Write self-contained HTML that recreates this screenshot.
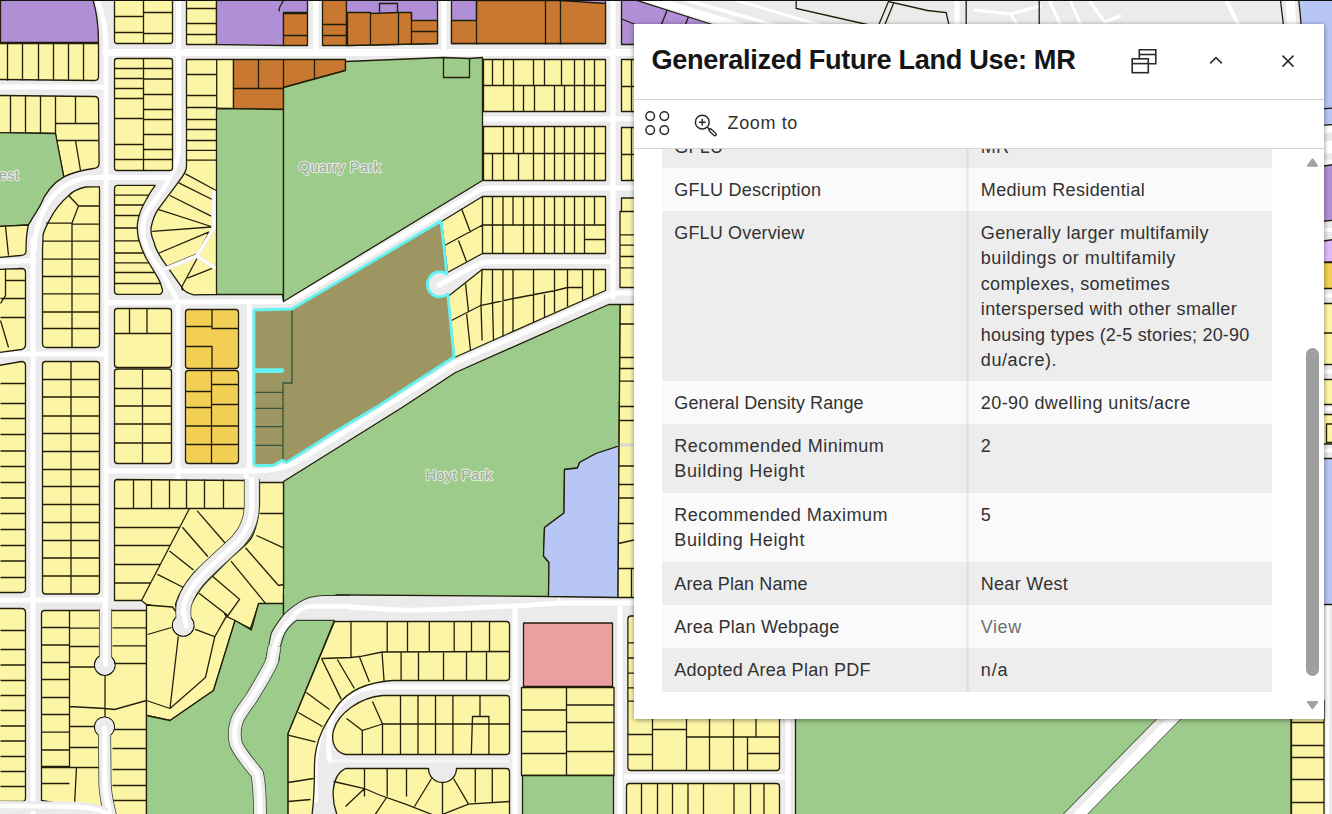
<!DOCTYPE html>
<html lang="en">
<head>
<meta charset="utf-8">
<title>Generalized Future Land Use</title>
<style>
html,body{margin:0;padding:0;}
body{width:1332px;height:814px;overflow:hidden;position:relative;background:#ebebeb;font-family:"Liberation Sans",sans-serif;}
#map{position:absolute;left:0;top:0;width:1332px;height:814px;overflow:hidden;}
#map svg{display:block;}
.popup{position:absolute;left:634px;top:24px;width:690px;height:694.8px;background:#fff;box-shadow:0 1px 5px rgba(0,0,0,.45);color:#323232;}
.hdr{position:absolute;left:0;top:0;width:690px;height:75px;border-bottom:1px solid #d4d4d4;}
.hdr h2{position:absolute;left:17.5px;top:16.6px;margin:0;font-size:27.2px;line-height:38px;font-weight:bold;color:#151515;white-space:nowrap;letter-spacing:-0.36px;}
.hbtn{position:absolute;top:0;width:40px;height:75px;}
.hbtn svg{position:absolute;left:50%;top:50%;}
.act{position:absolute;left:0;top:76px;width:690px;height:48px;border-bottom:1px solid #d4d4d4;}
.act .zt{position:absolute;left:93.6px;top:11.2px;font-size:18px;line-height:24px;color:#323232;letter-spacing:.62px;}
.body{position:absolute;left:0;top:125px;width:690px;height:569px;overflow:hidden;}
table.ft{position:absolute;left:28px;top:-24.2px;width:610px;border-collapse:separate;border-spacing:0;table-layout:fixed;font-size:18px;line-height:25.4px;color:#323232;letter-spacing:0;white-space:nowrap;}
table.ft th,table.ft td{padding:10px 0 0 12.3px;text-align:left;vertical-align:top;font-weight:normal;word-break:break-word;}
table.ft th{width:307px;box-sizing:border-box;border-right:3.5px solid rgba(0,0,0,.055);}
table.ft td{width:303px;box-sizing:border-box;padding-left:11.8px;}
table.ft tr:nth-child(odd){background:#ededed;}
table.ft tr:nth-child(even){background:#fafafa;}
table.ft a{color:#6e6e6e;text-decoration:none;}
.sb{position:absolute;right:0;top:0;width:20px;height:569px;background:#fff;}
.sb .thumb{position:absolute;left:2px;top:199px;width:13px;height:328px;border-radius:7px;background:#9f9f9f;}
.sb .up{position:absolute;left:2px;top:10px;width:0;height:0;border-left:6.5px solid transparent;border-right:6.5px solid transparent;border-bottom:8px solid #a3a3a3;}
.sb .dn{position:absolute;left:2px;top:552px;width:0;height:0;border-left:6.5px solid transparent;border-right:6.5px solid transparent;border-top:8px solid #a3a3a3;}

</style>
</head>
<body>
<div id="map">
<svg width="1332" height="814" viewBox="0 0 1332 814">
<rect width="1332" height="814" fill="#ebebeb"/>
<g fill="none" stroke="#ffffff" stroke-linecap="round" stroke-linejoin="round">
<path d="M33 240 L33 814" stroke-width="5"/>
<path d="M106 814" stroke-width="5"/>
<path d="M95 -5 C104 15 106 30 106 52 L106 600" stroke-width="5"/>
<path d="M178.5 -5 L178.5 150 C178 165 170 180 157.6 197 C150 207 145 213 143.5 222 C142 232 144 244 149.8 254 C153 260 157 266 161.6 271.7 L176 298 L178 302 L178 478" stroke-width="5"/>
<path d="M249.3 302 L249.3 470" stroke-width="5"/>
<path d="M246 470 C250 520 240 530 215 552 C190 575 182 600 183 622" stroke-width="5"/>
<path d="M315.6 -5 L315.6 52" stroke-width="5.5"/>
<path d="M444 -5 L444 52" stroke-width="5"/>
<path d="M613 -5 L613 297" stroke-width="5"/>
<path d="M515 608 L515 814" stroke-width="5"/>
<path d="M620 608 L620 814" stroke-width="5"/>
<path d="M788 700 L788 814" stroke-width="5"/>
<path d="M1327.5 600 L1327.5 814" stroke-width="3.5"/>
<path d="M106 52.6 L700 52.6" stroke-width="7"/>
<path d="M0 87 L106 87" stroke-width="5"/>
<path d="M482 119 L700 119" stroke-width="5"/>
<path d="M700 188 L490 188 C480 188 476 192 470 196 L290 301.5 L106 302.5" stroke-width="5"/>
<path d="M34 250 C35 225 45 200 62 188 C72 181 80 178 90 177.5 L166 177.5" stroke-width="5"/>
<path d="M-2 262 L34 260.5" stroke-width="5"/>
<path d="M0 354 L106 354" stroke-width="5"/>
<path d="M0 600 L106 600" stroke-width="5"/>
<path d="M106 471 L255 471" stroke-width="5"/>
<path d="M246 471 C270 472 285 468 300 460 L455 363 L613 293 L700 293" stroke-width="5"/>
<path d="M439 285 L478 264 C485 261.5 490 261.5 500 261.5 L613 261.5" stroke-width="5"/>
<path d="M320 606.5 C350 606.5 380 609 403 610 C440 610.5 480 607 514 606 C540 605 550 603 565 603 L700 603" stroke-width="4.8"/>
<path d="M559 603 L559 597" stroke-width="2"/>
<path d="M508 687 L380 687 C350 687 335 705 330 725 C328 745 328 755 330 761" stroke-width="5"/>
<path d="M330 761 L508 761" stroke-width="3" stroke="#f7f7f7"/>
<path d="M332 710 C318 730 312 760 316 800" stroke-width="5"/>
<path d="M626 777 L788 777" stroke-width="5"/>
<path d="M105 600 L105 664" stroke-width="5"/>
<path d="M105 727 L105 790 C106 800 108 806 110 814" stroke-width="5"/>
<path d="M0 806 C60 806 90 806 110 812" stroke-width="5"/>
<path d="M646 -2 L745 28" stroke-width="8"/>
<path d="M686 0 L785 28" stroke-width="3.5"/>
<path d="M735 0 L830 28" stroke-width="3"/>
<path d="M957 -2 L957 28" stroke-width="5"/>
<path d="M975 10 L1010 14 L1020 28 M1010 14 L1040 6" stroke-width="3"/>
<path d="M1050 2 L1062 28 M1070 0 L1082 28 M1090 2 L1105 22 L1120 16" stroke-width="3"/>
<path d="M1225 -2 L1240 28" stroke-width="4"/>
<path d="M1290 -2 L1292 28" stroke-width="9"/>
<path d="M1315 130 L1340 128.5" stroke-width="7"/>
<path d="M1315 148 L1340 146.5" stroke-width="13"/>
<path d="M1315 163.5 L1340 161.5" stroke-width="5"/>
<path d="M1318 230 L1340 230" stroke-width="4"/>
<path d="M1318 295.5 L1340 295.5" stroke-width="4"/>
<path d="M1318 371.5 L1340 371.5" stroke-width="4"/>
<path d="M1318 409 L1340 409" stroke-width="4"/>
<path d="M1318 450.5 L1340 450.5" stroke-width="4"/>
</g>
<g stroke="#211e0a" stroke-width="1.3" stroke-linejoin="round" transform="translate(0.5 0.5)">
<path d="M0 -2 L92 -2 C96 10 98 25 98 42 L0 42 Z" fill="#b08fd6"/>
<rect x="114" y="-3" width="58" height="46" fill="#fdf5a6" rx="2.5"/>
<rect x="186" y="-3" width="30" height="47" fill="#fdf5a6"/>
<polygon points="216,-2 307,-2 307,12 283,12 283,45 216,44" fill="#b08fd6"/>
<path d="M279 11 C277 8 281 4 283 0" fill="none"/>
<rect x="283" y="13" width="24" height="32" fill="#c87830"/>
<rect x="322" y="-2" width="24" height="47" fill="#c87830"/>
<path d="M-2 43 L98 43 L98 76 Q98 80 94 80 L-2 79 Z" fill="#fdf5a6"/>
<path d="M-2 95 L94 96 Q98 96 98 100 L98.6 163 Q98.6 167.5 93 168 C80 170 70 173 63.3 176.4 L56 140 L55 133 L-2 132 Z" fill="#fdf5a6"/>
<path d="M-2 132 L55 133 L63.3 176.4 C52 183 44 194 39.7 204.9 C35 213 31 219 27.9 224.5 L-2 226 Z" fill="#9dcb8b"/>
<rect x="114" y="58" width="58" height="112" fill="#fdf5a6" rx="2.5"/>
<path d="M186 59 L233 59 L233 108 L216.2 108 L216.2 294 L193 294.3 C189 293 186 292 183.2 289.4 L166.5 265.8 C160 257 155 250 153.7 242.2 C151 236 150 231 150.7 226.5 C152 220 154 214 157.6 208.8 L177.3 182.3 C182 176 186 172 186 165.6 Z" fill="#fdf5a6"/>
<polygon points="233,59 345,59 345,70 283,87 283,109 233,108" fill="#c87830"/>
<polygon points="216,108 283,109 283,301 282,294 216,294" fill="#9dcb8b"/>
<polygon points="346,-2 437,-2 437,43 346,45" fill="#b08fd6"/>
<polygon points="347,12 370,12 370,13 398,12 411,12 411,20 437,20 437,43 347,45" fill="#c87830"/>
<polygon points="451,-2 605,-2 605,43 451,43" fill="#b08fd6"/>
<polygon points="451,20 476,20 476,0 560,0 605,3 605,43 451,43" fill="#c87830"/>
<polygon points="621,-2 630.5,-2 711.6,24 711.6,44 621,44" fill="#b08fd6"/>
<polygon points="283,87 345,70 345,61 443,57 469,58 482,57 482,180 283,301" fill="#9dcb8b"/>
<rect x="483" y="59" width="122" height="52" fill="#fdf5a6"/>
<rect x="483" y="126" width="122" height="54" fill="#fdf5a6"/>
<rect x="621" y="59" width="79" height="52" fill="#fdf5a6"/>
<rect x="621" y="127" width="79" height="53" fill="#fdf5a6"/>
<path d="M-2 226 L27.9 224.5 C26 232 25.5 240 25.5 251 Q25 255 20 255 L-2 257 Z" fill="#fdf5a6"/>
<path d="M-2 269 L21 268 Q25 268 25 272 L25 344 Q25 348 21 349 L-2 352 Z" fill="#fdf5a6"/>
<path d="M98.6 186.2 L84.9 186.5 C78 188 72 191 68.2 195 C60 202 54 210 49.5 218.6 C46 225 43.5 230 42.6 234.4 L42 250 L42 343 Q42 347 46 347 L95 347 Q99 347 99 343 L99 189 Q99 186 98.6 186.2 Z" fill="#fdf5a6"/>
<path d="M117 184.8 L154.7 184.8 C150 191 148 195 145.8 199 C141 207 138 215 137 222.6 C136.5 228 137 233 138 238.3 C140 245 142 251 145.8 258 L157.6 277.6 C160 282 161 285 162 289.4 Q162 293.8 158 293.8 L117 293.8 Q114 293.8 114 290.8 L114 187.8 Q114 184.8 117 184.8 Z" fill="#fdf5a6"/>
<rect x="114" y="308" width="57" height="59" fill="#fdf5a6" rx="3"/>
<rect x="185" y="309" width="53" height="59" fill="#f3d055" rx="3"/>
<polygon points="441,221 482,196 605,196 605,253 482,253 447,272" fill="#fdf5a6"/>
<polygon points="447.5,296 481.6,269 605,269 605,290 454,357" fill="#fdf5a6"/>
<polygon points="621,197.5 700,197.5 700,287 619.5,287 619.5,211 621,211" fill="#fdf5a6"/>
<polygon points="619.5,304 700,304 700,412 618.8,412" fill="#fdf5a6"/>
<polygon points="283,481 400,408 455,372 608,304 619.5,304 618.5,445.5 595.5,453 579,462 577,467.5 564,469 563.5,512.5 544,527 543,555.5 548.5,562 548,596 283,594" fill="#9dcb8b"/>
<path d="M-2 365 L21 361 Q25 361 25 365 L25 588 Q25 592 21 592 L-2 592 Z" fill="#fdf5a6"/>
<rect x="42" y="361" width="57" height="232.5" fill="#fdf5a6" rx="3"/>
<rect x="114" y="368.5" width="57" height="94.5" fill="#fdf5a6" rx="3"/>
<rect x="185" y="370" width="53" height="93" fill="#f3d055" rx="3"/>
<path d="M117 479 L245 480 L245 513 C244 528 235 537 224 544 C212 555 200 566 193 572.7 C185 582 178 594 175 603.7 L176 610 L146 604 L141 600 L114 600 L114 482 Q114 479 117 479 Z" fill="#fdf5a6"/>
<path d="M259 482 L283 482 L283 604 L258 604 L250 628 L228 617 L220 612 L188 612 C189 606 190 604 190.7 603.7 C196 594 200 588 206 581.6 L230.7 557 C243 546 251 540 253 533 C256 525 257.5 520 258 513 L259 505 Z" fill="#fdf5a6"/>
<polygon points="618.5,445.5 595.5,453 579,462 577,467.5 564,469 563.5,512.5 544,527 543,555.5 548.5,562 548,596 617.5,597" fill="#b8c6f5"/>
<polygon points="618.9,400 700,400 700,597 617.5,597" fill="#fdf5a6" stroke="none"/>
<rect x="618" y="443" width="22" height="3" fill="#d8d8d8" stroke="none"/>
<path d="M-2 608 L21 608 Q25 608 25 612 L25 798 Q25 801 21 801 L-2 801 Z" fill="#fdf5a6"/>
<path d="M44 610 L146 610 L146 818 L112 818 C108 808 95 806 80 806 C65 806 55 802 41 800 L41 613 Q41 610 44 610 Z" fill="#fdf5a6"/>
<path d="M146 604.5 L172 606.5 L176 612 L222 612 L228 617 L234.6 620 L213 690 L169.5 720 L146 715 Z" fill="#fdf5a6"/>
<rect x="187.5" y="609.5" width="36" height="6" fill="#fdf5a6" stroke="none"/>
<polygon points="146,715 169.5,720 213,690 234.6,620 250.8,629.5 258,603 283,603 283,616 300,619.8 334,619.8 287.6,733 287.6,818 146,818" fill="#9dcb8b"/>
<polygon points="283.5,588 335,588 335,596 300,604 283.5,617" fill="#9dcb8b" stroke="none"/>
<rect x="288" y="757.5" width="25" height="2.5" fill="#c9c9c9" stroke="none"/>
<path d="M334 621 L506 621 Q509 621 509 624 L509 677 Q509 680 506 680 L392 680 C365 682 348 690 337 705 C325 722 314 740 314 765 C314 790 313 805 311 818 L287.6 818 L287.6 733 Z" fill="#fdf5a6"/>
<path d="M382 695 L506 695 Q509 695 509 698 L509 751 Q509 754 506 754 L345 754 C335 752 330 742 333 730 C338 712 360 697 382 695 Z" fill="#fdf5a6"/>
<path d="M345 768 L428 768 A14 14 0 0 0 456 768 L506 768 Q509 768 509 771 L509 818 L338 818 C330 800 330 775 345 768 Z" fill="#fdf5a6"/>
<rect x="523" y="622.5" width="89" height="63.5" fill="#eb9fa0"/>
<rect x="521" y="687" width="92.5" height="88" fill="#fdf5a6"/>
<rect x="522" y="775" width="91" height="43" fill="#9dcb8b"/>
<rect x="627.4" y="615.5" width="151.6" height="154.5" fill="#fdf5a6" rx="3"/>
<rect x="626" y="783" width="153" height="35" fill="#fdf5a6" rx="3"/>
<rect x="795" y="700" width="495.5" height="118" fill="#9dcb8b"/>
<rect x="1291" y="700" width="32.5" height="118" fill="#fdf5a6"/>
<path d="M1298 -2 L1340 -2 L1340 123.5 L1305 126 C1304 80 1302 30 1298 -2 Z" fill="#b8c6f5"/>
<polygon points="1320,166 1340,163 1340,219 1320,221" fill="#b08fd6"/>
<polygon points="1320,241 1340,238 1340,261 1320,262" fill="#e0b9fa"/>
<rect x="1320" y="262" width="20" height="26" fill="#f3d055"/>
<rect x="1320" y="303" width="20" height="61" fill="#fdf5a6"/>
<rect x="1320" y="379" width="20" height="25" fill="#fdf5a6"/>
<rect x="1320" y="414" width="20" height="29.5" fill="#fdf5a6"/>
<rect x="1326" y="423.5" width="14" height="18.5" fill="#fdf5a6"/>
<rect x="1320" y="458" width="20" height="146" fill="#b8c6f5"/>
</g>
<path transform="translate(0.5 0.5)" fill="none" stroke="#211e0a" stroke-width="1.3" d="M143 -3L143 43M114 16L143 16M114 32L143 32M143 12L172 12M143 33L172 33M186 8L216 8M186 23L216 23M186 34L216 34M283 35L307 35M322 24L346 24M322 35L346 35M7 43L7 80M22 43L22 80M38 43L38 80M53 43L53 80M68 43L68 80M83 43L83 80M10 95L10 132M25 95L25 132M40 95L40 132M55 96L55 133M75 96L75 123M55 123L98 123M56 140L98 140M75 140L80 170M143 58L143 170M114 68L143 68M114 78L143 78M114 88L143 88M114 98L143 98M114 118L143 118M114 144L143 144M114 159L143 159M143 68L172 68M143 78.5L172 78.5M143 94L172 94M143 109L172 109M143 119L172 119M143 134L172 134M143 149L172 149M143 159L172 159M216.2 59L216.2 108M186 74L216.2 74M186 95L216.2 95M186 107L216.2 107M186 119L216.2 119M186 129L216.2 129M186 140L216.2 140M186 149.8L216.2 149.8M186 159.7L216.2 159.7M185 173.4L215.6 190M178.3 182.3L211.7 199M169.4 195L210.7 215.7M157.6 208.8L210.7 226M151.7 230.8L210.7 226.5M158.6 252.5L208.7 231.4M166.5 265.8L196 253.6M208.7 231.4L197 254M197 257L181.2 286.5L182 290M211.7 267.8L187 277.6M258 59L258 88M233 88L283 88M283 59L283 87M314 59L314 78M370 12L370 44M398 12L398 44M411 12L411 44M411 31L437 31M379 12L379 3L397 3L397 12M476 0L476 44M545 0L545 44M560 0L560 44M621 18.5L640 26M443 57L443 77L469 77L469 58M483 85L605 85M492 59L492 85M503 59L503 85M513 59L513 85M533 59L533 85M544 59L544 85M561 59L561 85M574 59L574 85M584 59L584 85M594 59L594 85M513 85L513 111M523 85L523 111M534 85L534 111M554 85L554 111M564 85L564 111M574 85L574 111M584 85L584 111M594 85L594 111M483 153L605 153M503 126L503 153M513 126L513 153M523 126L523 153M533 126L533 153M544 126L544 153M554 126L554 153M564 126L564 153M574 126L574 153M584 126L584 153M594 126L594 153M492 153L492 180M503 153L503 180M518 153L518 180M533 153L533 180M544 153L544 180M554 153L554 180M564 153L564 180M574 153L574 180M584 153L584 180M594 153L594 180M631 59L631 111M621 86L700 86M631 127L631 180M621 154L700 154M5 226L8 255M5 268L5 295L0 303M5 280L25 280M0 298L25 298M0 317L25 317M0 320L8 347M68.2 195L78 205.5L71.5 222.6L71.5 347M78 205.5L99 205.5M45.6 222.6L71.5 222.6M71.5 223.6L99 223.6M42 240.7L99 240.7M42 258.6L99 258.6M42 276L99 276M42 293.4L99 293.4M42 311.5L99 311.5M42 328L99 328M114 194.7L148 194.7M114 204.5L143 204.5M114 215L139 215M114 227.5L137 227.5M114 240.3L139 240.3M114 252.5L143 252.5M114 262.3L148.5 262.3M114 272L154 272M114 283L160 283M129 308L129 333M146.5 308L146.5 333M114 333L171 333M211.5 309L211.5 328L238 328M185 326L211.5 326M185 346L211.5 346L211.5 368M482 196L482 253M482 224.5L605 224.5M492 196L492 224.5M502.5 196L502.5 224.5M512.5 196L512.5 224.5M523 196L523 224.5M533 196L533 224.5M544 196L544 224.5M554 196L554 224.5M564 196L564 224.5M574 196L574 224.5M584 196L584 224.5M594 196L594 224.5M492 224.5L492 253M502.5 224.5L502.5 253M523 224.5L523 253M533 224.5L533 253M544 224.5L544 253M554 224.5L554 253M564 224.5L564 253M574 224.5L574 253M584 224.5L584 253M584 239L605 239M461 208L470 232M444 245L482 224.5M458 240L466 261M451 320L480 305L513 298L555 290L567 287L582 287M465 283L468 311M466 312L470 350M481.6 269L480.5 304.4L481.6 340M492 269L492 303M492 303L493 340M502.5 269L502.5 336M512.5 269L512.5 331M533 269L533 322M544 294L544 317M554 269L554 312M567 269L567 306M582 269L582 300M593 269L593 295M620 211L700 211M620 234.4L700 234.4M620 244.7L700 244.7M620 256L700 256M620 267.4L700 267.4M619 323.5L700 323.5M619 357L700 357M619 368L700 368M619 380.6L700 380.6M619 406L700 406M0 383L25 383M0 403L25 403M0 418L25 418M0 434L25 434M0 450.5L25 450.5M0 466L25 466M0 482L25 482M0 497.5L25 497.5M0 513L25 513M0 529L25 529M0 545L25 545M0 560.5L25 560.5M0 577L25 577M70.5 361L70.5 593.5M42 379L99 379M42 396.5L99 396.5M42 415.5L99 415.5M42 433L99 433M42 451L99 451M42 469L99 469M42 486L99 486M42 504L99 504M42 522L99 522M42 540L99 540M42 557.5L99 557.5M42 575.5L99 575.5M142 368.5L142 463M114 388L171 388M114 405.5L171 405.5M114 423.5L171 423.5M114 442.5L171 442.5M211 370L211 463M185 391L211 391M211 384L238 384M185 407L211 407M211 404L238 404M185 425.5L238 425.5M185 444L238 444M114 508L244 508M133 479L133 508M151 479L151 508M169 479L169 508M186 479L186 508M204 479L204 508M223 479L223 508M189 508L141 600M114 527L179.087 527M114 545L169.696 545M114 564L159.783 564M114 582.5L150.13 582.5M196.7 510.4L225 543M181.9 526.7L207.3 556M169 550.6L193 569.4M157 573.8L183 587M259 513L283 513M256 535L283 547.3M245 547.3L278 585L283 584M230.5 560.6L264.8 602.6M211.7 575.4L239 598.8L226 617M198.5 592.7L227 614.8M618.9 400L617.5 597M617.5 597L700 597M618 420L640 420M618 465.5L640 465.5M618 484L640 484M618 497.5L640 497.5M618 523L640 523M618 568L640 568M618 543L640 538M631 568L631 597M0 630L25 630M0 649L25 649M0 664.5L25 664.5M0 680L25 680M0 695L25 695M0 710L25 710M0 725.5L25 725.5M0 740.5L25 740.5M0 756L25 756M0 771L25 771M0 786L25 786M69 610L69 767M41 627L69 627M41 644.5L69 644.5M41 662L69 662M41 679L69 679M41 697L69 697M41 714L69 714M41 731.7L69 731.7M41 749.5L69 749.5M41 766L69 766M41 783L69 783M69 627.7L99 627.7M69 646L99 646M69 666.5L99 666.5M69 726L99 726M69 747L99 747M69 767L99 767M69 706L104.5 708L114 709L146 700M41 767L76 767M76 767L74 805M112 627.4L146 627.4M112 645.4L146 645.4M112 663L146 663M112 729L146 729M112 748L146 748M112 769L146 769M112 785L146 785M112 800L146 800M104.5 675L104.5 717M147 634L171 627M177.8 636L169.5 708M146 700L169.5 708M194.7 628.8L214.3 636.2L205 677L169.5 708M214.3 636.2L226.5 614.6M283 594L283 616M287.6 734.7L315 741.4M287.6 782L313 778M287.6 801L310 799M321 658L350.5 657L361.8 655.7L381.5 651.5L509 651M350.5 621L350.5 651M386.7 621L386.7 651M407 621L407 651M428.8 621L428.8 651M453.7 621L453.7 651M471 621L471 651M489 621L489 651M350.5 651L350.5 657M381.5 651.5L383.6 681M400.6 651L400.6 680M418 651L418 680M443 651L443 680M466 651L466 680M486 651L486 680M336.8 659L353.9 688M359 656.5L368.9 681.5M321 658L340.7 698.6M305.8 692L329 709M297.8 712L322 726M382 723.5L509 723.5M382 723.5L361.8 730L361.8 754M361.8 730L346 718M372 701L382 723.5M400 695L400 754M417.5 695L417.5 754M435 695L435 754M452.4 695L452.4 754M382 723.5L382 754M479.5 695L479.5 716M470.8 754L472 716L488.4 716L488.4 754M364 768L364 796M386.7 768L386.7 796M406 768L406 796M474.8 768L474.8 802M491.8 768L491.8 802M333 781L364 788L379 794.5L405 803.7L436.7 816M509 801L468 803.7L436.7 816M442 782L442 814M431 778L414 806M453 778L468 803.7M364 788L345 806M386 797L372 818M566 687L566 775M521 709.5L566 709.5M521 731L566 731M521 753L566 753M566 704.5L613.5 704.5M566 722L613.5 722M566 751L613.5 751M627.4 642.3L652 642.3M627.4 657.5L652 657.5M627.4 672.7L652 672.7M627.4 687.3L652 687.3M627.4 700.6L652 700.6M652 700L652 770M686 700L686 770M709 700L709 770M733 700L733 770M755.5 700L755.5 736.5M747 736.5L747 770M627 734L652 734M627 754L652 754M652 729L686 729M686 736.5L779 736.5M747 753L779 753M641 783L641 818M657 783L657 818M672 783L672 818M687.5 783L687.5 818M703 783L703 818M733.5 783L733.5 818M750 783L750 818M763.5 783L763.5 818M1291 722L1323.5 722M1291 745L1323.5 745M1291 757L1323.5 757M1291 779L1323.5 779M1291 802L1323.5 802M666.7 9.6L660.5 25M688 16.2L684.6 25M795.7 0L795.7 8L871 25M878 25L888 1L927 10L945.7 12L948.6 25M884 25L893 3M965.7 0L965.7 25M1038.7 0L1038.7 25M1280 0L1283 25M1305 109.5L1340 107M1320 332.5L1340 332.5"/>
<circle cx="183.2" cy="625.4" r="10.8" fill="#ebebeb" stroke="#14140c" stroke-width="1.2"/>
<path d="M251.8 479 L251.8 506 C251.5 522 246 532 238 541 C230 549 215 562 204 573 C195 582 187 594 184 604 C183 610 183 615 184 620" fill="none" stroke="#3a4a30" stroke-width="15.8" stroke-linecap="butt" stroke-linejoin="round"/>
<path d="M251.8 479 L251.8 506 C251.5 522 246 532 238 541 C230 549 215 562 204 573 C195 582 187 594 184 604 C183 610 183 615 184 620" fill="none" stroke="#ebebeb" stroke-width="14.2" stroke-linecap="butt" stroke-linejoin="round"/>
<path d="M251.8 479 L251.8 506 C251.5 522 246 532 238 541 C230 549 215 562 204 573 C195 582 187 594 184 604 C183 610 183 615 184 620" fill="none" stroke="#ffffff" stroke-width="5" stroke-linecap="round" stroke-linejoin="round"/>
<circle cx="183.2" cy="625.4" r="10.2" fill="#ebebeb"/>
<path d="M184 612 L186 626" stroke="#fff" stroke-width="5" stroke-linecap="round"/>
<circle cx="104.8" cy="665" r="10.3" fill="#ebebeb" stroke="#14140c" stroke-width="1.2"/>
<path d="M105.5 609 L105.5 660" fill="none" stroke="#3a4a30" stroke-width="13.1" stroke-linecap="butt" stroke-linejoin="round"/>
<path d="M105.5 609 L105.5 660" fill="none" stroke="#ebebeb" stroke-width="11.5" stroke-linecap="butt" stroke-linejoin="round"/>
<path d="M105.5 609 L105.5 660" fill="none" stroke="#ffffff" stroke-width="5" stroke-linecap="round" stroke-linejoin="round"/>
<circle cx="104.8" cy="665" r="9.7" fill="#ebebeb"/>
<path d="M105.5 640 L105.5 664" stroke="#fff" stroke-width="5" stroke-linecap="round"/>
<circle cx="104.5" cy="727" r="10" fill="#ebebeb" stroke="#14140c" stroke-width="1.2"/>
<path d="M104.5 732 L105 785 C106 800 108 806 111 818" fill="none" stroke="#3a4a30" stroke-width="13.1" stroke-linecap="butt" stroke-linejoin="round"/>
<path d="M104.5 732 L105 785 C106 800 108 806 111 818" fill="none" stroke="#ebebeb" stroke-width="11.5" stroke-linecap="butt" stroke-linejoin="round"/>
<path d="M104.5 732 L105 785 C106 800 108 806 111 818" fill="none" stroke="#ffffff" stroke-width="5" stroke-linecap="round" stroke-linejoin="round"/>
<circle cx="104.5" cy="727" r="9.4" fill="#ebebeb"/>
<path d="M104.5 728 L105 750" stroke="#fff" stroke-width="5" stroke-linecap="round"/>
<path d="M-5 806 C40 806 60 806 80 807 C90 808 100 810 106 813" fill="none" stroke="#ebebeb" stroke-width="10" stroke-linecap="butt" stroke-linejoin="round"/>
<path d="M-5 806 C40 806 60 806 80 807 C90 808 100 810 106 813" fill="none" stroke="#ffffff" stroke-width="4.5" stroke-linecap="round" stroke-linejoin="round"/>
<path d="M350 595.5 L323 595.5 C310 596 304 599 298.8 602.6 C292 607 287 611 283 615.4 C278 622 274 628 271.3 633 L265.6 661 L278.9 661 L280 648.8 C281 644 282 639 285 633 C288 628 291 624 296.8 620.3 L350 620.3 Z" fill="#ebebeb"/>
<path d="M350 595.5 L323 595.5 C310 596 304 599 298.8 602.6 C292 607 287 611 283 615.4 C278 622 274 628 271.3 633 L265.6 661" fill="none" stroke="#2c3a25" stroke-width="1.1"/>
<path d="M334.2 620.3 L296.8 620.3 C291 624 288 628 285 633 C282 639 281 644 280 648.8 L278.9 661" fill="none" stroke="#2c3a25" stroke-width="1.1"/>
<path d="M274.6 646 L272.3 660 C270 668 262 680 251.6 697.8 C243 710 238 716 236.5 722 C234 730 234 736 236 744 C239 752 250 765 257 773.5 C260 785 260 800 260 818" fill="none" stroke="#3a4a30" stroke-width="13.6" stroke-linecap="butt" stroke-linejoin="round"/>
<path d="M274.6 646 L272.3 660 C270 668 262 680 251.6 697.8 C243 710 238 716 236.5 722 C234 730 234 736 236 744 C239 752 250 765 257 773.5 C260 785 260 800 260 818" fill="none" stroke="#ebebeb" stroke-width="12" stroke-linecap="butt" stroke-linejoin="round"/>
<path d="M274.6 646 L272.3 660 C270 668 262 680 251.6 697.8 C243 710 238 716 236.5 722 C234 730 234 736 236 744 C239 752 250 765 257 773.5 C260 785 260 800 260 818" fill="none" stroke="#ffffff" stroke-width="4.8" stroke-linecap="round" stroke-linejoin="round"/>
<path d="M352 606.5 L308.6 606.5 C300 608 295 613 291 619.3 C285 626 280 633 277.2 639 C275 646 273 654 272.3 661" fill="none" stroke="#fff" stroke-width="4.7" stroke-linecap="round"/>
<path d="M213.7 191 L213.7 228.5 L197 256 L163.5 269.8 M197 256 L214.6 267.8" fill="none" stroke="#ebebeb" stroke-width="4.2" stroke-linecap="butt" stroke-linejoin="round"/>
<path d="M213.7 191 L213.7 228.5 L197 256 L163.5 269.8 M197 256 L214.6 267.8" fill="none" stroke="#ffffff" stroke-width="2.4" stroke-linecap="round" stroke-linejoin="round"/>
<path d="M1180.7 706.7 L1063.6 826.1" fill="none" stroke="#3a4a30" stroke-width="18" stroke-linecap="butt" stroke-linejoin="round"/>
<path d="M1180.7 706.7 L1063.6 826.1" fill="none" stroke="#ebebeb" stroke-width="16.4" stroke-linecap="butt" stroke-linejoin="round"/>
<path d="M1180.7 706.7 L1063.6 826.1" fill="none" stroke="#ffffff" stroke-width="0.01" stroke-linecap="round" stroke-linejoin="round"/>
<path d="M1183 709 L1066 828.3" stroke="#fff" stroke-width="10" fill="none"/>
<path d="M254 310 L292 309 L441 221 L446.9 274 A12.5 12.5 0 1 0 447.8 294 L454 357 L375 408 L333 433 L286.3 462.6 L282.3 460.2 L273 465.5 L257 465.5 Q254 465.5 254 462.5 Z" fill="#9d9662" stroke="none"/>
<path d="M292 310V383H283V461M254 392.3H283M254 408.3H283M254 426.7H283M254 445.4H283" fill="none" stroke="#33553b" stroke-width="1.3"/>
<path d="M254 310 L292 309 L441 221 L446.9 274 A12.5 12.5 0 1 0 447.8 294 L454 357 L375 408 L333 433 L286.3 462.6 L282.3 460.2 L273 465.5 L257 465.5 Q254 465.5 254 462.5 Z" fill="none" stroke="#63f1f1" stroke-width="2.8" stroke-linejoin="round" stroke-linecap="round"/>
<path d="M255 370.6 H282" fill="none" stroke="#63f1f1" stroke-width="4.6" stroke-linecap="round"/>
<text x="340" y="172" font-family="Liberation Sans, sans-serif" font-size="14.6" letter-spacing="0.35" fill="#a2a6a2" stroke="#ffffff" stroke-opacity="0.62" stroke-width="2.3" paint-order="stroke" stroke-linejoin="round" text-anchor="middle">Quarry Park</text>
<text x="459" y="480" font-family="Liberation Sans, sans-serif" font-size="14.6" letter-spacing="0.35" fill="#a2a6a2" stroke="#ffffff" stroke-opacity="0.62" stroke-width="2.3" paint-order="stroke" stroke-linejoin="round" text-anchor="middle">Hoyt Park</text>
<text x="9" y="180" font-family="Liberation Sans, sans-serif" font-size="14.6" letter-spacing="0.35" fill="#a2a6a2" stroke="#ffffff" stroke-opacity="0.62" stroke-width="2.3" paint-order="stroke" stroke-linejoin="round" text-anchor="middle">est</text>
<rect x="0" y="0" width="1332" height="1" fill="#111"/>
</svg>
</div>
<div class="popup">
  <div class="hdr">
    <h2>Generalized Future Land Use: MR</h2>
    <div class="hbtn" style="left:490px">
      <svg width="28" height="28" viewBox="0 0 28 28" style="margin:-14px 0 0 -14px" fill="none" stroke="#2b2b2b" stroke-width="1.6">
        <path d="M9.3 10.8V1.8H25.8V15.7H18.3"/>
        <path d="M9.3 6.5H25.8"/>
        <rect x="2.2" y="10.8" width="16.1" height="13.9"/>
        <path d="M2.2 15.6H18.3"/>
      </svg>
    </div>
    <div class="hbtn" style="left:562px">
      <svg width="20" height="20" viewBox="0 0 20 20" style="margin:-10px 0 0 -10px" fill="none" stroke="#2b2b2b" stroke-width="1.5">
        <path d="M4.2 11.4l5.8-5.8 5.8 5.8"/>
      </svg>
    </div>
    <div class="hbtn" style="left:634px">
      <svg width="20" height="20" viewBox="0 0 20 20" style="margin:-10px 0 0 -10px" fill="none" stroke="#2b2b2b" stroke-width="1.5">
        <path d="M4.5 3.6l11 11M15.5 3.6l-11 11"/>
      </svg>
    </div>
  </div>
  <div class="act">
    <svg width="30" height="30" viewBox="0 0 30 30" style="position:absolute;left:8px;top:9px" fill="none" stroke="#2b2b2b" stroke-width="1.5">
      <circle cx="8.2" cy="7.1" r="4.3"/><circle cx="22.3" cy="7.1" r="4.3"/><circle cx="8.2" cy="21.1" r="4.3"/><circle cx="22.3" cy="21.1" r="4.3"/>
    </svg>
    <svg width="28" height="28" viewBox="0 0 28 28" style="position:absolute;left:58px;top:10px" fill="none" stroke="#2b2b2b" stroke-width="1.5">
      <circle cx="10.3" cy="12.2" r="6.9"/><path d="M10.3 8.8v6.8M6.9 12.2h6.8"/><path d="M15.4 17.3l2.2 2.1"/><path d="M18.4 20.2l4.6 4.3" stroke-width="4" stroke-linecap="round"/><path d="M18.6 20.4l4.2 3.9" stroke="#fff" stroke-width="1.3" stroke-linecap="round"/>
    </svg>
    <span class="zt">Zoom to</span>
  </div>
  <div class="body">
    <table class="ft">
      <tr style="height:43.1px"><th><span style="letter-spacing:.2px">GFLU</span></th><td><span style="letter-spacing:.2px">MR</span></td></tr>
      <tr style="height:43.1px"><th><span style="letter-spacing:0.244px">GFLU Description</span></th><td><span style="letter-spacing:0.348px">Medium Residential</span></td></tr>
      <tr style="height:170.2px"><th><span style="letter-spacing:0.156px">GFLU Overview</span></th><td><span style="letter-spacing:0.356px">Generally larger multifamily</span><br><span style="letter-spacing:0.540px">buildings or multifamily</span><br><span style="letter-spacing:0.307px">complexes, sometimes</span><br><span style="letter-spacing:0.360px">interspersed with other smaller</span><br><span style="letter-spacing:0.198px">housing types (2-5 stories; 20-90</span><br><span style="letter-spacing:0.594px">du/acre).</span></td></tr>
      <tr style="height:42.6px"><th><span style="letter-spacing:0.110px">General Density Range</span></th><td><span style="letter-spacing:0.432px">20-90 dwelling units/acre</span></td></tr>
      <tr style="height:68.9px"><th><span style="letter-spacing:0.523px">Recommended Minimum</span><br><span style="letter-spacing:0.644px">Building Height</span></th><td><span style="letter-spacing:.2px">2</span></td></tr>
      <tr style="height:69.4px"><th><span style="letter-spacing:0.446px">Recommended Maximum</span><br><span style="letter-spacing:0.644px">Building Height</span></th><td><span style="letter-spacing:.2px">5</span></td></tr>
      <tr style="height:42.9px"><th><span style="letter-spacing:0.094px">Area Plan Name</span></th><td><span style="letter-spacing:0.275px">Near West</span></td></tr>
      <tr style="height:43.4px"><th><span style="letter-spacing:0.257px">Area Plan Webpage</span></th><td><a><span style="letter-spacing:0.566px">View</span></a></td></tr>
      <tr style="height:43.4px"><th><span style="letter-spacing:0.249px">Adopted Area Plan PDF</span></th><td><span style="letter-spacing:0.884px">n/a</span></td></tr>
    </table>
    <div class="sb"><svg width="20" height="569" viewBox="0 0 20 569" style="position:absolute;left:0;top:0"><g fill="#a2a2a2" stroke="#a2a2a2" stroke-width="1.8" stroke-linejoin="round"><polygon points="8.5,10.2 13.2,16.8 3.8,16.8"/><polygon points="3.8,552.9 13.2,552.9 8.5,559.6"/></g></svg><div class="thumb"></div></div>
  </div>
</div>

</body>
</html>
